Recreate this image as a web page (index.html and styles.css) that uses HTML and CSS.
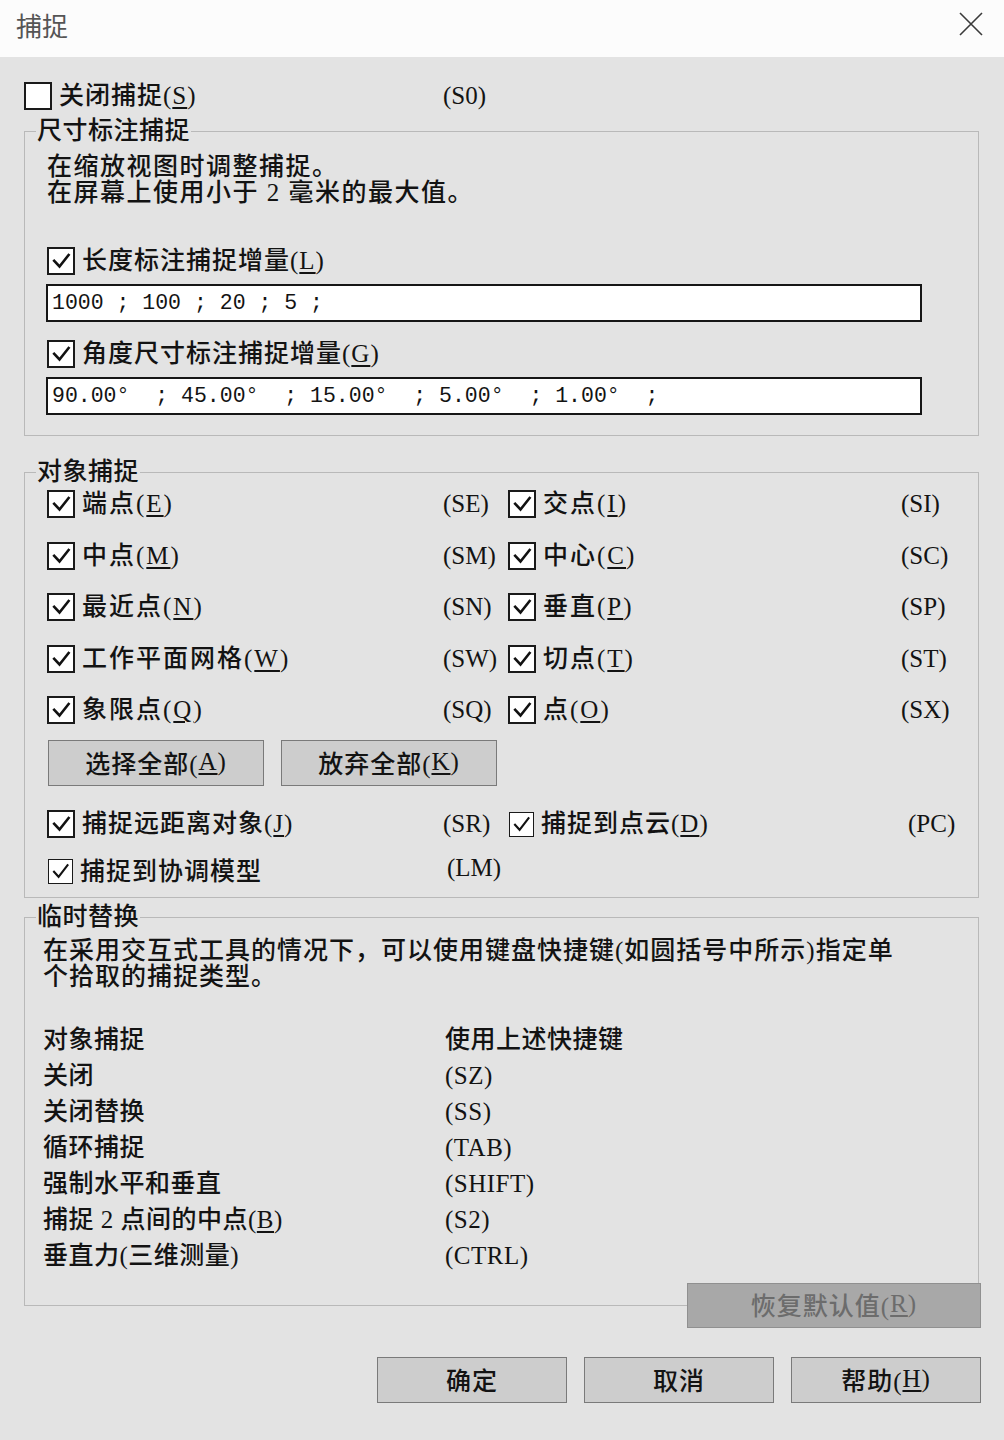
FILE: index.html
```html
<!DOCTYPE html>
<html lang="zh-CN">
<head>
	<meta charset="UTF-8">
	<title>捕捉</title>
	<link rel="stylesheet" href="styles.css">
</head>
<body>
	<div class="titlebar">
		<h1>捕捉</h1>
		<svg class="close" viewBox="0 0 24 24"><path d="M1 1L23 23M23 1L1 23" stroke="#3a3a3a" stroke-width="1.6" fill="none"/></svg>
	</div>

	<div class="main">
		<div class="opt top-opt">
			<span class="cb"></span>
			<span class="lbl">关闭捕捉(<u>S</u>)</span>
			<span class="key">(S0)</span>
		</div>

		<fieldset class="snap-dim">
			<legend>尺寸标注捕捉</legend>
			<p class="desc">在缩放视图时调整捕捉。<br>在屏幕上使用小于 2 毫米的最大值。</p>
			<div class="opt inc">
				<span class="cb on"><svg viewBox="0 0 24 24"><polyline points="4.3,10.8 10.5,17.5 20.4,5" /></svg></span>
				<span class="lbl">长度标注捕捉增量(<u>L</u>)</span>
			</div>
			<div class="field">1000 ; 100 ; 20 ; 5 ;</div>
			<div class="opt inc2">
				<span class="cb on"><svg viewBox="0 0 24 24"><polyline points="4.3,10.8 10.5,17.5 20.4,5" /></svg></span>
				<span class="lbl">角度尺寸标注捕捉增量(<u>G</u>)</span>
			</div>
			<div class="field">90.00°  ; 45.00°  ; 15.00°  ; 5.00°  ; 1.00°  ;</div>
		</fieldset>

		<fieldset class="snap-obj">
			<legend>对象捕捉</legend>
			<div class="grid">
				<div class="opt"><span class="cb on"><svg viewBox="0 0 24 24"><polyline points="4.3,10.8 10.5,17.5 20.4,5" /></svg></span><span class="lbl wide">端点(<u>E</u>)</span><span class="key">(SE)</span></div>
				<div class="opt"><span class="cb on"><svg viewBox="0 0 24 24"><polyline points="4.3,10.8 10.5,17.5 20.4,5" /></svg></span><span class="lbl wide">交点(<u>I</u>)</span><span class="key">(SI)</span></div>
				<div class="opt"><span class="cb on"><svg viewBox="0 0 24 24"><polyline points="4.3,10.8 10.5,17.5 20.4,5" /></svg></span><span class="lbl wide">中点(<u>M</u>)</span><span class="key">(SM)</span></div>
				<div class="opt"><span class="cb on"><svg viewBox="0 0 24 24"><polyline points="4.3,10.8 10.5,17.5 20.4,5" /></svg></span><span class="lbl wide">中心(<u>C</u>)</span><span class="key">(SC)</span></div>
				<div class="opt"><span class="cb on"><svg viewBox="0 0 24 24"><polyline points="4.3,10.8 10.5,17.5 20.4,5" /></svg></span><span class="lbl wide">最近点(<u>N</u>)</span><span class="key">(SN)</span></div>
				<div class="opt"><span class="cb on"><svg viewBox="0 0 24 24"><polyline points="4.3,10.8 10.5,17.5 20.4,5" /></svg></span><span class="lbl wide">垂直(<u>P</u>)</span><span class="key">(SP)</span></div>
				<div class="opt"><span class="cb on"><svg viewBox="0 0 24 24"><polyline points="4.3,10.8 10.5,17.5 20.4,5" /></svg></span><span class="lbl wide">工作平面网格(<u>W</u>)</span><span class="key">(SW)</span></div>
				<div class="opt"><span class="cb on"><svg viewBox="0 0 24 24"><polyline points="4.3,10.8 10.5,17.5 20.4,5" /></svg></span><span class="lbl wide">切点(<u>T</u>)</span><span class="key">(ST)</span></div>
				<div class="opt"><span class="cb on"><svg viewBox="0 0 24 24"><polyline points="4.3,10.8 10.5,17.5 20.4,5" /></svg></span><span class="lbl wide">象限点(<u>Q</u>)</span><span class="key">(SQ)</span></div>
				<div class="opt"><span class="cb on"><svg viewBox="0 0 24 24"><polyline points="4.3,10.8 10.5,17.5 20.4,5" /></svg></span><span class="lbl wide">点(<u>O</u>)</span><span class="key">(SX)</span></div>
			</div>
			<div class="btns">
				<div class="btn">选择全部(<u>A</u>)</div>
				<div class="btn">放弃全部(<u>K</u>)</div>
			</div>
			<div class="grid extra">
				<div class="opt"><span class="cb on"><svg viewBox="0 0 24 24"><polyline points="4.3,10.8 10.5,17.5 20.4,5" /></svg></span><span class="lbl">捕捉远距离对象(<u>J</u>)</span><span class="key">(SR)</span></div>
				<div class="opt"><span class="cb small on"><svg viewBox="0 0 24 24"><polyline points="4.5,11.5 10,17.5 20,4.5" /></svg></span><span class="lbl">捕捉到点云(<u>D</u>)</span><span class="key pc">(PC)</span></div>
				<div class="opt low"><span class="cb small on"><svg viewBox="0 0 24 24"><polyline points="4.5,11.5 10,17.5 20,4.5" /></svg></span><span class="lbl">捕捉到协调模型</span><span class="key lm">(LM)</span></div>
			</div>
		</fieldset>

		<fieldset class="override">
			<legend>临时替换</legend>
			<p class="desc wide-desc">在采用交互式工具的情况下，可以使用键盘快捷键(如圆括号中所示)指定单<br>个拾取的捕捉类型。</p>
			<div class="tbl">
				<span>对象捕捉</span><span>使用上述快捷键</span>
				<span>关闭</span><span>(SZ)</span>
				<span>关闭替换</span><span>(SS)</span>
				<span>循环捕捉</span><span>(TAB)</span>
				<span>强制水平和垂直</span><span>(SHIFT)</span>
				<span>捕捉 2 点间的中点(<u>B</u>)</span><span>(S2)</span>
				<span>垂直力(三维测量)</span><span>(CTRL)</span>
			</div>
		</fieldset>
		<div class="restore-row">
			<div class="btn restore">恢复默认值(<u>R</u>)</div>
		</div>

		<div class="footer">
			<div class="btn">确定</div>
			<div class="btn">取消</div>
			<div class="btn">帮助(<u>H</u>)</div>
		</div>
	</div>
</body>
</html>
```

FILE: styles.css
```css
*{
	margin: 0;
	padding: 0;
	box-sizing: border-box;
}
body{
	width: 1004px;
	height: 1440px;
	background: #e3e3e3;
	font-family: "Liberation Serif", "Noto Sans CJK SC", serif;
	font-size: 25px;
	font-weight: 500;
	color: #131313;
}
u{
	text-decoration-thickness: 1.5px;
	text-underline-offset: 3px;
}
.titlebar{
	height: 57px;
	background: #fcfcfc;
	display: flex;
	align-items: center;
	justify-content: space-between;
	padding: 0 21px 9px 16px;
}
.titlebar h1{
	font-size: 26px;
	font-weight: 400;
	color: #555;
	font-family: "Noto Sans CJK SC", sans-serif;
}
.close{
	width: 24px;
	height: 24px;
}
.main{
	padding: 25px 25px 0 24px;
}

/* checkbox rows */
.opt{
	display: flex;
	align-items: center;
	height: 28px;
}
.opt .lbl{
	flex: 1;
	margin-left: 7px;
	line-height: 28px;
	letter-spacing: 1px;
	white-space: nowrap;
}
.opt .lbl.wide{
	letter-spacing: 2px;
}
.opt .key{
	flex: none;
	width: 44px;
	white-space: nowrap;
}
.top-opt{
	width: 463px;
}
.cb{
	width: 28px;
	height: 28px;
	flex: none;
	border: 2px solid #1a1a1a;
	background: #fff;
	display: flex;
}
.cb svg{
	width: 100%;
	height: 100%;
}
.cb polyline{
	fill: none;
	stroke: #111;
	stroke-width: 2.6;
}
.cb.small{
	width: 25px;
	height: 25px;
	border-width: 1.5px;
	margin-left: 1px;
}
.cb.small polyline{
	stroke-width: 2.2;
}

/* group boxes */
fieldset{
	border: 1px solid #b9b9b9;
}
legend{
	line-height: 26px;
	padding: 0 1px;
	margin-left: -11px;
	letter-spacing: 0.5px;
}
.desc{
	line-height: 26px;
	letter-spacing: 1.5px;
}
.snap-dim{
	margin-top: 8px;
	padding: 10px 22px 20px 22px;
}
.inc{
	margin-top: 41px;
}
.inc2{
	margin-top: 18px;
}
.field{
	margin-top: 9px;
	margin-left: -1px;
	width: 876px;
	height: 38px;
	border: 2px solid #161616;
	background: #fff;
	font-family: "Liberation Mono", monospace;
	font-size: 21.5px;
	font-weight: 400;
	line-height: 34px;
	white-space: pre;
	padding-left: 4px;
}

.snap-obj{
	margin-top: 23px;
	padding: 5px 0 13px 22px;
}
.grid{
	display: grid;
	grid-template-columns: 440px 437px;
	column-gap: 21px;
	row-gap: 23.5px;
}
.btns{
	display: flex;
	gap: 17px;
	margin-top: 16px;
	margin-left: 1px;
}
.btn{
	width: 216px;
	height: 46px;
	background: #cdcdcd;
	border: 1.5px solid #7a7a7a;
	display: flex;
	align-items: center;
	justify-content: center;
	letter-spacing: 1px;
	padding-bottom: 3px;
}
.extra{
	margin-top: 24px;
	row-gap: 21px;
}
.extra .opt.low{
	height: 25px;
}
.key.pc{
	margin-right: -7px;
	margin-left: 7px;
}
.key.lm{
	margin-left: 4px;
	margin-right: -4px;
	margin-top: -8px;
}

.override{
	margin-top: 6px;
	padding: 8px 20px 31px 18px;
}
.override legend{
	margin-left: -7px;
}
.wide-desc{
	letter-spacing: 1px;
}
.tbl{
	margin-top: 32px;
	display: grid;
	grid-template-columns: 402px auto;
	line-height: 36px;
	letter-spacing: 0.5px;
}
.restore-row{
	display: flex;
	justify-content: flex-end;
	margin-top: -23px;
	margin-right: -2px;
	position: relative;
}
.btn.restore{
	width: 294px;
	height: 45px;
	background: #a8a8a8;
	border-color: #909090;
	color: #6c6c6c;
}
.footer{
	display: flex;
	justify-content: flex-end;
	gap: 17px;
	margin-top: 29px;
	margin-right: -2px;
}
.footer .btn{
	width: 190px;
}
```
